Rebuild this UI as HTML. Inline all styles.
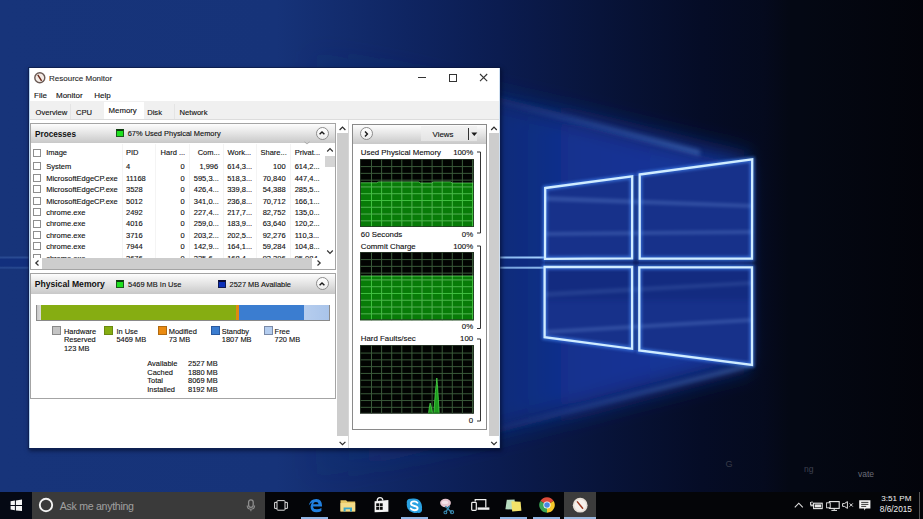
<!DOCTYPE html><html><head><meta charset="utf-8"><style>
*{margin:0;padding:0;box-sizing:border-box}
html,body{width:923px;height:519px;overflow:hidden;background:#0a1440}
body{position:relative;font-family:"Liberation Sans",sans-serif;color:#1a1a1a}
.a{position:absolute}
.t{position:absolute;white-space:nowrap;line-height:1}
svg{position:absolute;overflow:visible}
.hdr{position:absolute;background:linear-gradient(#fdfdfd,#e6e6e6 45%,#c8c8c8)}
.circ{position:absolute;width:13px;height:13px;border-radius:50%;border:1px solid #8c8c8c;background:linear-gradient(#ffffff,#ececec)}
.cb{position:absolute;width:8px;height:8px;border:1px solid #8e8e8e;background:#fff}
</style></head><body>
<svg style="left:0;top:0" width="923" height="492" viewBox="0 0 923 492">
<defs>
<linearGradient id="bgx" x1="0" x2="923" y1="0" y2="0" gradientUnits="userSpaceOnUse">
<stop offset="0" stop-color="#17347a"/>
<stop offset="0.3" stop-color="#163379"/>
<stop offset="0.44" stop-color="#0f2562"/>
<stop offset="0.54" stop-color="#0b1c50"/>
<stop offset="0.65" stop-color="#08143a"/>
<stop offset="0.76" stop-color="#050c26"/>
<stop offset="0.87" stop-color="#040918"/>
<stop offset="1" stop-color="#02040a"/>
</linearGradient>
<linearGradient id="cone" x1="752" x2="300" y1="262" y2="262" gradientUnits="userSpaceOnUse">
<stop offset="0" stop-color="#17389e"/>
<stop offset="0.4" stop-color="#12308f"/>
<stop offset="1" stop-color="#17347a" stop-opacity="0"/>
</linearGradient>
<linearGradient id="rdark" x1="748" x2="790" y1="0" y2="0" gradientUnits="userSpaceOnUse">
<stop offset="0" stop-color="#040a20" stop-opacity="0"/>
<stop offset="0.35" stop-color="#050a1e" stop-opacity=".85"/>
<stop offset="1" stop-color="#040814" stop-opacity="1"/>
</linearGradient>
<linearGradient id="rdk2" x1="800" x2="923" y1="0" y2="0" gradientUnits="userSpaceOnUse"><stop offset="0" stop-color="#020308" stop-opacity="0"/><stop offset="1" stop-color="#020308" stop-opacity=".8"/></linearGradient>
<filter id="b14" x="-50%" y="-50%" width="200%" height="200%"><feGaussianBlur stdDeviation="12"/></filter>
<filter id="b6" x="-50%" y="-50%" width="200%" height="200%"><feGaussianBlur stdDeviation="2.2"/></filter>
<filter id="b2" x="-50%" y="-50%" width="200%" height="200%"><feGaussianBlur stdDeviation="1.5"/></filter>
<filter id="b1" x="-50%" y="-50%" width="200%" height="200%"><feGaussianBlur stdDeviation="0.6"/></filter>
<linearGradient id="hb" x1="0" x2="545" y1="0" y2="0" gradientUnits="userSpaceOnUse">
<stop offset="0" stop-color="#6a9ae8" stop-opacity=".2"/>
<stop offset="0.85" stop-color="#8ac0ff" stop-opacity=".75"/>
<stop offset="1" stop-color="#a8d4ff" stop-opacity="1"/>
</linearGradient>
<linearGradient id="sk" x1="0" x2="1" y1="0" y2="0">
<stop offset="0" stop-color="#5a8ae0" stop-opacity="0.1"/>
<stop offset="1" stop-color="#6a9ae8" stop-opacity="0.7"/>
</linearGradient>
</defs>
<rect width="923" height="492" fill="url(#bgx)"/>
<path d="M752 160 L500 98 L0 -30 L0 560 L500 432 L752 364 Z" fill="url(#cone)" filter="url(#b14)"/>
<rect x="745" y="0" width="178" height="492" fill="url(#rdark)"/>
<rect x="800" y="0" width="123" height="492" fill="url(#rdk2)"/>
<!-- streaks -->
<g filter="url(#b6)">
<path d="M498 96 L700 150 L700 156 L498 104 Z" fill="url(#sk)" opacity=".55"/>
<path d="M498 426 L752 363 L752 367 L498 432 Z" fill="url(#sk)" opacity=".6"/>
</g>
<!-- horizontal beam band -->
<rect x="0" y="258.5" width="545" height="8" fill="#0d2a80" opacity=".5"/>
<rect x="0" y="256.5" width="545" height="2" fill="url(#hb)" filter="url(#b1)"/>
<rect x="0" y="266.7" width="545" height="2" fill="url(#hb)" filter="url(#b1)" opacity=".85"/>
<!-- logo panes fill -->
<g fill="#17318a">
<path d="M545.2 188 L632.2 176.4 L632.1 258.3 L545 258.8 Z"/>
<path d="M639.7 174.5 L752.2 159.4 L752 258.7 L639.7 258.5 Z"/>
<path d="M544.6 266.8 L632.1 267 L632.1 348.8 L544.6 337.2 Z"/>
<path d="M639.3 267.3 L752 267.3 L752 365 L639.3 350.5 Z"/>
</g>
<rect x="633" y="176" width="6" height="174" fill="#0a1c5c" opacity=".8"/><rect x="545" y="259" width="207" height="8" fill="#0a1c5c" opacity=".7"/>
<!-- pane streaks -->
<g filter="url(#b2)" opacity=".22" fill="#8ab4f4">
<path d="M545 196 L752 204 L752 208 L545 201 Z"/>
<path d="M545 232 L752 230 L752 234 L545 236 Z"/>
<path d="M545 292 L752 281 L752 285 L545 297 Z"/>
<path d="M545 330 L752 318 L752 322 L545 334 Z"/>
</g>
<g opacity=".35">
<path d="M545 266 L752 266 L752 300 L545 300 Z" fill="#0d2470" filter="url(#b6)"/>
</g>
<!-- glow outlines -->
<g fill="none" stroke="#4a90ff" stroke-width="5" filter="url(#b2)" opacity=".6">
<path d="M545.2 188 L632.2 176.4 L632.1 258.3 L545 258.8 Z"/>
<path d="M639.7 174.5 L752.2 159.4 L752 258.7 L639.7 258.5 Z"/>
<path d="M544.6 266.8 L632.1 267 L632.1 348.8 L544.6 337.2 Z"/>
<path d="M639.3 267.3 L752 267.3 L752 365 L639.3 350.5 Z"/>
</g>
<g fill="none" stroke="#d0ecff" stroke-width="2.3" stroke-linejoin="miter">
<path d="M545.2 188 L632.2 176.4 L632.1 258.3 L545 258.8 Z"/>
<path d="M639.7 174.5 L752.2 159.4 L752 258.7 L639.7 258.5 Z"/>
<path d="M544.6 266.8 L632.1 267 L632.1 348.8 L544.6 337.2 Z"/>
<path d="M639.3 267.3 L752 267.3 L752 365 L639.3 350.5 Z"/>
</g>
</svg>

<div class="a" style="left:28px;top:67px;width:473px;height:382px;background:rgba(8,16,50,.55);box-shadow:1px 2px 4px rgba(2,6,28,.55)"></div>
<div class="a" style="left:29px;top:68px;width:471px;height:380px;background:#fff"></div>
<svg style="left:34px;top:72px" width="12" height="12"><circle cx="5.8" cy="5.8" r="5" fill="#f3ebe6" stroke="#6a5a55" stroke-width="1.4"/><path d="M3.8 2.8L7.6 8.8" stroke="#6a2a1a" stroke-width="1.4"/></svg>
<div class="t" style="top:75.23px;font-size:8px;color:#2a2a2a;-webkit-text-stroke:0.12px currentColor;left:49.00px;">Resource Monitor</div>
<div class="a" style="left:418px;top:77px;width:8px;height:1px;background:#333"></div>
<div class="a" style="left:449px;top:74px;width:7.5px;height:7.5px;border:1px solid #333"></div>
<svg style="left:479px;top:73px" width="9" height="9"><path d="M1 1L8.2 8.2M8.2 1L1 8.2" stroke="#333" stroke-width="1.1"/></svg>
<div class="t" style="top:92.03px;font-size:8px;color:#111;-webkit-text-stroke:0.12px currentColor;left:34.00px;">File</div>
<div class="t" style="top:92.03px;font-size:8px;color:#111;-webkit-text-stroke:0.12px currentColor;left:56.00px;">Monitor</div>
<div class="t" style="top:92.03px;font-size:8px;color:#111;-webkit-text-stroke:0.12px currentColor;left:94.30px;">Help</div>
<div class="a" style="left:29px;top:101px;width:471px;height:18px;background:#f0f0f0"></div>
<div class="a" style="left:32.8px;top:104px;width:38.2px;height:15px;background:#f0f0f0;border-right:1px solid #e4e4e4"></div>
<div class="t" style="top:108.57px;font-size:7.6px;color:#111;-webkit-text-stroke:0.12px currentColor;left:35.60px;">Overview</div>
<div class="a" style="left:71px;top:104px;width:32.8px;height:15px;background:#f0f0f0"></div>
<div class="t" style="top:108.57px;font-size:7.6px;color:#111;-webkit-text-stroke:0.12px currentColor;left:76.00px;">CPU</div>
<div class="a" style="left:103.8px;top:102px;width:40.2px;height:17px;background:#fff"></div>
<div class="t" style="top:106.90px;font-size:7.8px;color:#111;-webkit-text-stroke:0.12px currentColor;left:108.60px;">Memory</div>
<div class="a" style="left:144px;top:104px;width:31px;height:15px;background:#f0f0f0;border-right:1px solid #e4e4e4"></div>
<div class="t" style="top:108.57px;font-size:7.6px;color:#111;-webkit-text-stroke:0.12px currentColor;left:147.20px;">Disk</div>
<div class="a" style="left:175px;top:104px;width:38px;height:15px;background:#f0f0f0"></div>
<div class="t" style="top:108.57px;font-size:7.6px;color:#111;-webkit-text-stroke:0.12px currentColor;left:179.60px;">Network</div>
<div class="a" style="left:29px;top:119px;width:471px;height:1px;background:#dcdcdc"></div>
<div class="a" style="left:30.2px;top:123px;width:305.8px;height:147px;border:1px solid #a4a4a4;background:#fff"></div>
<div class="hdr" style="left:31.2px;top:124px;width:303.8px;height:19px"></div>
<div class="t" style="top:130.56px;font-size:8.2px;color:#111;font-weight:bold;left:35.00px;">Processes</div>
<div class="a" style="left:116px;top:129px;width:8px;height:8px;background:#1ee01e;border:1px solid #1a5a1a;border-top:2px solid #0d3a0d"></div>
<div class="t" style="top:130.19px;font-size:7.45px;color:#111;-webkit-text-stroke:0.12px currentColor;left:127.70px;">67% Used Physical Memory</div>
<div class="circ" style="left:315.5px;top:126.5px"></div>
<svg style="left:318px;top:129px" width="8" height="8"><path d="M1.6 5.3L4 2.9L6.4 5.3" stroke="#1a1a1a" stroke-width="1.4" fill="none"/></svg>
<div class="a" style="left:121.6px;top:144px;width:1px;height:114px;background:#f4f4f4"></div>
<div class="a" style="left:155.4px;top:144px;width:1px;height:114px;background:#f4f4f4"></div>
<div class="a" style="left:188.6px;top:144px;width:1px;height:114px;background:#f4f4f4"></div>
<div class="a" style="left:222.6px;top:144px;width:1px;height:114px;background:#f4f4f4"></div>
<div class="a" style="left:256px;top:144px;width:1px;height:114px;background:#f4f4f4"></div>
<div class="a" style="left:290.4px;top:144px;width:1px;height:114px;background:#f4f4f4"></div>
<div class="cb" style="left:33.1px;top:148.5px"></div>
<div class="t" style="top:148.85px;font-size:7.5px;color:#111;-webkit-text-stroke:0.12px currentColor;left:46.20px;">Image</div>
<div class="t" style="top:148.85px;font-size:7.5px;color:#111;-webkit-text-stroke:0.12px currentColor;left:126.00px;">PID</div>
<div class="t" style="top:148.85px;font-size:7.5px;color:#111;-webkit-text-stroke:0.12px currentColor;left:160.60px;">Hard ...</div>
<div class="t" style="top:148.85px;font-size:7.5px;color:#111;-webkit-text-stroke:0.12px currentColor;left:197.70px;">Com...</div>
<div class="t" style="top:148.85px;font-size:7.5px;color:#111;-webkit-text-stroke:0.12px currentColor;left:227.60px;">Work...</div>
<div class="t" style="top:148.85px;font-size:7.5px;color:#111;-webkit-text-stroke:0.12px currentColor;left:260.50px;">Share...</div>
<div class="t" style="top:148.85px;font-size:7.5px;color:#111;-webkit-text-stroke:0.12px currentColor;left:294.70px;">Privat...</div>
<svg style="left:304px;top:141px" width="6" height="4"><path d="M0.5 0.8L3 3L5.5 0.8" stroke="#a0a0a0" stroke-width="0.8" fill="none"/></svg>
<div class="cb" style="left:33.1px;top:162.30px"></div>
<div class="t" style="top:163.15px;font-size:7.5px;color:#111;-webkit-text-stroke:0.12px currentColor;left:46.20px;">System</div>
<div class="t" style="top:163.15px;font-size:7.5px;color:#111;-webkit-text-stroke:0.12px currentColor;left:126.00px;">4</div>
<div class="t" style="top:163.15px;font-size:7.5px;color:#111;-webkit-text-stroke:0.12px currentColor;right:738.40px;text-align:right;">0</div>
<div class="t" style="top:163.15px;font-size:7.5px;color:#111;-webkit-text-stroke:0.12px currentColor;right:704.80px;text-align:right;">1,996</div>
<div class="t" style="top:163.15px;font-size:7.5px;color:#111;-webkit-text-stroke:0.12px currentColor;left:227.20px;">614,3...</div>
<div class="t" style="top:163.15px;font-size:7.5px;color:#111;-webkit-text-stroke:0.12px currentColor;right:637.40px;text-align:right;">100</div>
<div class="t" style="top:163.15px;font-size:7.5px;color:#111;-webkit-text-stroke:0.12px currentColor;left:294.70px;">614,2...</div>
<div class="cb" style="left:33.1px;top:173.75px"></div>
<div class="t" style="top:174.60px;font-size:7.5px;color:#111;-webkit-text-stroke:0.12px currentColor;left:46.20px;">MicrosoftEdgeCP.exe</div>
<div class="t" style="top:174.60px;font-size:7.5px;color:#111;-webkit-text-stroke:0.12px currentColor;left:126.00px;">11168</div>
<div class="t" style="top:174.60px;font-size:7.5px;color:#111;-webkit-text-stroke:0.12px currentColor;right:738.40px;text-align:right;">0</div>
<div class="t" style="top:174.60px;font-size:7.5px;color:#111;-webkit-text-stroke:0.12px currentColor;right:704.20px;text-align:right;">595,3...</div>
<div class="t" style="top:174.60px;font-size:7.5px;color:#111;-webkit-text-stroke:0.12px currentColor;left:227.20px;">518,3...</div>
<div class="t" style="top:174.60px;font-size:7.5px;color:#111;-webkit-text-stroke:0.12px currentColor;right:637.40px;text-align:right;">70,840</div>
<div class="t" style="top:174.60px;font-size:7.5px;color:#111;-webkit-text-stroke:0.12px currentColor;left:294.70px;">447,4...</div>
<div class="cb" style="left:33.1px;top:185.20px"></div>
<div class="t" style="top:186.05px;font-size:7.5px;color:#111;-webkit-text-stroke:0.12px currentColor;left:46.20px;">MicrosoftEdgeCP.exe</div>
<div class="t" style="top:186.05px;font-size:7.5px;color:#111;-webkit-text-stroke:0.12px currentColor;left:126.00px;">3528</div>
<div class="t" style="top:186.05px;font-size:7.5px;color:#111;-webkit-text-stroke:0.12px currentColor;right:738.40px;text-align:right;">0</div>
<div class="t" style="top:186.05px;font-size:7.5px;color:#111;-webkit-text-stroke:0.12px currentColor;right:704.20px;text-align:right;">426,4...</div>
<div class="t" style="top:186.05px;font-size:7.5px;color:#111;-webkit-text-stroke:0.12px currentColor;left:227.20px;">339,8...</div>
<div class="t" style="top:186.05px;font-size:7.5px;color:#111;-webkit-text-stroke:0.12px currentColor;right:637.40px;text-align:right;">54,388</div>
<div class="t" style="top:186.05px;font-size:7.5px;color:#111;-webkit-text-stroke:0.12px currentColor;left:294.70px;">285,5...</div>
<div class="cb" style="left:33.1px;top:196.65px"></div>
<div class="t" style="top:197.50px;font-size:7.5px;color:#111;-webkit-text-stroke:0.12px currentColor;left:46.20px;">MicrosoftEdgeCP.exe</div>
<div class="t" style="top:197.50px;font-size:7.5px;color:#111;-webkit-text-stroke:0.12px currentColor;left:126.00px;">5012</div>
<div class="t" style="top:197.50px;font-size:7.5px;color:#111;-webkit-text-stroke:0.12px currentColor;right:738.40px;text-align:right;">0</div>
<div class="t" style="top:197.50px;font-size:7.5px;color:#111;-webkit-text-stroke:0.12px currentColor;right:704.20px;text-align:right;">341,0...</div>
<div class="t" style="top:197.50px;font-size:7.5px;color:#111;-webkit-text-stroke:0.12px currentColor;left:227.20px;">236,8...</div>
<div class="t" style="top:197.50px;font-size:7.5px;color:#111;-webkit-text-stroke:0.12px currentColor;right:637.40px;text-align:right;">70,712</div>
<div class="t" style="top:197.50px;font-size:7.5px;color:#111;-webkit-text-stroke:0.12px currentColor;left:294.70px;">166,1...</div>
<div class="cb" style="left:33.1px;top:208.10px"></div>
<div class="t" style="top:208.95px;font-size:7.5px;color:#111;-webkit-text-stroke:0.12px currentColor;left:46.20px;">chrome.exe</div>
<div class="t" style="top:208.95px;font-size:7.5px;color:#111;-webkit-text-stroke:0.12px currentColor;left:126.00px;">2492</div>
<div class="t" style="top:208.95px;font-size:7.5px;color:#111;-webkit-text-stroke:0.12px currentColor;right:738.40px;text-align:right;">0</div>
<div class="t" style="top:208.95px;font-size:7.5px;color:#111;-webkit-text-stroke:0.12px currentColor;right:704.20px;text-align:right;">227,4...</div>
<div class="t" style="top:208.95px;font-size:7.5px;color:#111;-webkit-text-stroke:0.12px currentColor;left:227.20px;">217,7...</div>
<div class="t" style="top:208.95px;font-size:7.5px;color:#111;-webkit-text-stroke:0.12px currentColor;right:637.40px;text-align:right;">82,752</div>
<div class="t" style="top:208.95px;font-size:7.5px;color:#111;-webkit-text-stroke:0.12px currentColor;left:294.70px;">135,0...</div>
<div class="cb" style="left:33.1px;top:219.55px"></div>
<div class="t" style="top:220.40px;font-size:7.5px;color:#111;-webkit-text-stroke:0.12px currentColor;left:46.20px;">chrome.exe</div>
<div class="t" style="top:220.40px;font-size:7.5px;color:#111;-webkit-text-stroke:0.12px currentColor;left:126.00px;">4016</div>
<div class="t" style="top:220.40px;font-size:7.5px;color:#111;-webkit-text-stroke:0.12px currentColor;right:738.40px;text-align:right;">0</div>
<div class="t" style="top:220.40px;font-size:7.5px;color:#111;-webkit-text-stroke:0.12px currentColor;right:704.20px;text-align:right;">259,0...</div>
<div class="t" style="top:220.40px;font-size:7.5px;color:#111;-webkit-text-stroke:0.12px currentColor;left:227.20px;">183,9...</div>
<div class="t" style="top:220.40px;font-size:7.5px;color:#111;-webkit-text-stroke:0.12px currentColor;right:637.40px;text-align:right;">63,640</div>
<div class="t" style="top:220.40px;font-size:7.5px;color:#111;-webkit-text-stroke:0.12px currentColor;left:294.70px;">120,2...</div>
<div class="cb" style="left:33.1px;top:231.00px"></div>
<div class="t" style="top:231.85px;font-size:7.5px;color:#111;-webkit-text-stroke:0.12px currentColor;left:46.20px;">chrome.exe</div>
<div class="t" style="top:231.85px;font-size:7.5px;color:#111;-webkit-text-stroke:0.12px currentColor;left:126.00px;">3716</div>
<div class="t" style="top:231.85px;font-size:7.5px;color:#111;-webkit-text-stroke:0.12px currentColor;right:738.40px;text-align:right;">0</div>
<div class="t" style="top:231.85px;font-size:7.5px;color:#111;-webkit-text-stroke:0.12px currentColor;right:704.20px;text-align:right;">203,2...</div>
<div class="t" style="top:231.85px;font-size:7.5px;color:#111;-webkit-text-stroke:0.12px currentColor;left:227.20px;">202,5...</div>
<div class="t" style="top:231.85px;font-size:7.5px;color:#111;-webkit-text-stroke:0.12px currentColor;right:637.40px;text-align:right;">92,276</div>
<div class="t" style="top:231.85px;font-size:7.5px;color:#111;-webkit-text-stroke:0.12px currentColor;left:294.70px;">110,3...</div>
<div class="cb" style="left:33.1px;top:242.45px"></div>
<div class="t" style="top:243.30px;font-size:7.5px;color:#111;-webkit-text-stroke:0.12px currentColor;left:46.20px;">chrome.exe</div>
<div class="t" style="top:243.30px;font-size:7.5px;color:#111;-webkit-text-stroke:0.12px currentColor;left:126.00px;">7944</div>
<div class="t" style="top:243.30px;font-size:7.5px;color:#111;-webkit-text-stroke:0.12px currentColor;right:738.40px;text-align:right;">0</div>
<div class="t" style="top:243.30px;font-size:7.5px;color:#111;-webkit-text-stroke:0.12px currentColor;right:704.20px;text-align:right;">142,9...</div>
<div class="t" style="top:243.30px;font-size:7.5px;color:#111;-webkit-text-stroke:0.12px currentColor;left:227.20px;">164,1...</div>
<div class="t" style="top:243.30px;font-size:7.5px;color:#111;-webkit-text-stroke:0.12px currentColor;right:637.40px;text-align:right;">59,284</div>
<div class="t" style="top:243.30px;font-size:7.5px;color:#111;-webkit-text-stroke:0.12px currentColor;left:294.70px;">104,8...</div>
<div class="cb" style="left:33.1px;top:253.90px"></div>
<div class="t" style="top:254.75px;font-size:7.5px;color:#111;-webkit-text-stroke:0.12px currentColor;left:46.20px;">chrome.exe</div>
<div class="t" style="top:254.75px;font-size:7.5px;color:#111;-webkit-text-stroke:0.12px currentColor;left:126.00px;">3676</div>
<div class="t" style="top:254.75px;font-size:7.5px;color:#111;-webkit-text-stroke:0.12px currentColor;right:738.40px;text-align:right;">0</div>
<div class="t" style="top:254.75px;font-size:7.5px;color:#111;-webkit-text-stroke:0.12px currentColor;right:704.20px;text-align:right;">225,6...</div>
<div class="t" style="top:254.75px;font-size:7.5px;color:#111;-webkit-text-stroke:0.12px currentColor;left:227.20px;">168,4...</div>
<div class="t" style="top:254.75px;font-size:7.5px;color:#111;-webkit-text-stroke:0.12px currentColor;right:637.40px;text-align:right;">93,396</div>
<div class="t" style="top:254.75px;font-size:7.5px;color:#111;-webkit-text-stroke:0.12px currentColor;left:294.70px;">95,084</div>
<div class="a" style="left:32px;top:258px;width:303px;height:11px;background:#fff"></div>
<div class="a" style="left:41.7px;top:258.4px;width:270.3px;height:10.4px;background:#cdcdcd"></div>
<svg style="left:34px;top:259px" width="6" height="8"><path d="M4.5 1.5L1.8 4L4.5 6.5" stroke="#333" stroke-width="1.2" fill="none"/></svg>
<svg style="left:315.5px;top:259px" width="6" height="8"><path d="M1.5 1.5L4.2 4L1.5 6.5" stroke="#333" stroke-width="1.2" fill="none"/></svg>
<div class="a" style="left:324.5px;top:144px;width:10.5px;height:114px;background:#fff"></div>
<div class="a" style="left:324.5px;top:156px;width:10.5px;height:10.5px;background:#d4d4d4"></div>
<svg style="left:326px;top:147px" width="8" height="6"><path d="M1.2 4.5L4 1.7L6.8 4.5" stroke="#333" stroke-width="1.2" fill="none"/></svg>
<svg style="left:326px;top:249px" width="8" height="6"><path d="M1.2 1.5L4 4.3L6.8 1.5" stroke="#333" stroke-width="1.2" fill="none"/></svg>
<div class="a" style="left:30.2px;top:273px;width:305.8px;height:126px;border:1px solid #a4a4a4;background:#fff"></div>
<div class="hdr" style="left:31.2px;top:274px;width:303.8px;height:19.5px"></div>
<div class="t" style="top:280.22px;font-size:8.6px;color:#111;font-weight:bold;left:34.70px;">Physical Memory</div>
<div class="a" style="left:116px;top:279.5px;width:8px;height:8px;background:#1ee01e;border:1px solid #1a5a1a;border-top:2px solid #0d3a0d"></div>
<div class="t" style="top:280.69px;font-size:7.45px;color:#111;-webkit-text-stroke:0.12px currentColor;left:128.00px;">5469 MB In Use</div>
<div class="a" style="left:217.5px;top:279.5px;width:8px;height:8px;background:#0b2fb8;border:1px solid #101a50;border-top:2px solid #0a0a30"></div>
<div class="t" style="top:280.69px;font-size:7.45px;color:#111;-webkit-text-stroke:0.12px currentColor;left:229.50px;">2527 MB Available</div>
<div class="circ" style="left:315.5px;top:277px"></div>
<svg style="left:318px;top:279.5px" width="8" height="8"><path d="M1.6 5.3L4 2.9L6.4 5.3" stroke="#1a1a1a" stroke-width="1.4" fill="none"/></svg>
<div class="a" style="left:35.8px;top:304.6px;width:294px;height:16px;background:#8a8a8a"></div>
<div class="a" style="left:36.6px;top:305.4px;width:4.6px;height:14.4px;background:linear-gradient(90deg,#c8c8c8,#dcdcdc)"></div>
<div class="a" style="left:41.2px;top:305.4px;width:195.1px;height:14.4px;background:#86ad12"></div>
<div class="a" style="left:236.3px;top:305.4px;width:2.6px;height:14.4px;background:#e08a12"></div>
<div class="a" style="left:238.9px;top:305.4px;width:65px;height:14.4px;background:#3b7dd0"></div>
<div class="a" style="left:303.9px;top:305.4px;width:25.1px;height:14.4px;background:linear-gradient(90deg,#b6cdee,#a9c4ea)"></div>
<div class="a" style="left:52.3px;top:326.2px;width:9px;height:9.3px;background:#c4c4c4;border:1px solid #8a8a8a"></div>
<div class="t" style="top:327.69px;font-size:7.45px;color:#111;-webkit-text-stroke:0.12px currentColor;left:63.90px;">Hardware</div>
<div class="t" style="top:336.29px;font-size:7.45px;color:#111;-webkit-text-stroke:0.12px currentColor;left:63.90px;">Reserved</div>
<div class="t" style="top:344.89px;font-size:7.45px;color:#111;-webkit-text-stroke:0.12px currentColor;left:63.90px;">123 MB</div>
<div class="a" style="left:104.3px;top:326.2px;width:9px;height:9.3px;background:#86ad12;border:1px solid #6a8a10"></div>
<div class="t" style="top:327.69px;font-size:7.45px;color:#111;-webkit-text-stroke:0.12px currentColor;left:116.40px;">In Use</div>
<div class="t" style="top:336.29px;font-size:7.45px;color:#111;-webkit-text-stroke:0.12px currentColor;left:116.40px;">5469 MB</div>
<div class="a" style="left:157.6px;top:326.2px;width:9px;height:9.3px;background:#ea8a10;border:1px solid #b06a10"></div>
<div class="t" style="top:327.69px;font-size:7.45px;color:#111;-webkit-text-stroke:0.12px currentColor;left:168.70px;">Modified</div>
<div class="t" style="top:336.29px;font-size:7.45px;color:#111;-webkit-text-stroke:0.12px currentColor;left:168.70px;">73 MB</div>
<div class="a" style="left:210.5px;top:326.2px;width:9px;height:9.3px;background:#3b7dd0;border:1px solid #2a5aa0"></div>
<div class="t" style="top:327.69px;font-size:7.45px;color:#111;-webkit-text-stroke:0.12px currentColor;left:221.80px;">Standby</div>
<div class="t" style="top:336.29px;font-size:7.45px;color:#111;-webkit-text-stroke:0.12px currentColor;left:221.80px;">1807 MB</div>
<div class="a" style="left:263.6px;top:326.2px;width:9px;height:9.3px;background:#b4cdef;border:1px solid #7a8aa8"></div>
<div class="t" style="top:327.69px;font-size:7.45px;color:#111;-webkit-text-stroke:0.12px currentColor;left:274.60px;">Free</div>
<div class="t" style="top:336.29px;font-size:7.45px;color:#111;-webkit-text-stroke:0.12px currentColor;left:274.60px;">720 MB</div>
<div class="t" style="top:360.19px;font-size:7.45px;color:#111;-webkit-text-stroke:0.12px currentColor;left:147.30px;">Available</div>
<div class="t" style="top:360.19px;font-size:7.45px;color:#111;-webkit-text-stroke:0.12px currentColor;left:188.00px;">2527 MB</div>
<div class="t" style="top:368.79px;font-size:7.45px;color:#111;-webkit-text-stroke:0.12px currentColor;left:147.30px;">Cached</div>
<div class="t" style="top:368.79px;font-size:7.45px;color:#111;-webkit-text-stroke:0.12px currentColor;left:188.00px;">1880 MB</div>
<div class="t" style="top:377.39px;font-size:7.45px;color:#111;-webkit-text-stroke:0.12px currentColor;left:147.30px;">Total</div>
<div class="t" style="top:377.39px;font-size:7.45px;color:#111;-webkit-text-stroke:0.12px currentColor;left:188.00px;">8069 MB</div>
<div class="t" style="top:385.99px;font-size:7.45px;color:#111;-webkit-text-stroke:0.12px currentColor;left:147.30px;">Installed</div>
<div class="t" style="top:385.99px;font-size:7.45px;color:#111;-webkit-text-stroke:0.12px currentColor;left:188.00px;">8192 MB</div>
<div class="a" style="left:337px;top:132.5px;width:11px;height:303px;background:#cdcdcd"></div>
<svg style="left:338px;top:125px" width="9" height="7"><path d="M1.6 5L4.5 2.1L7.4 5" stroke="#2a2a2a" stroke-width="1.2" fill="none"/></svg>
<svg style="left:338px;top:439.5px" width="9" height="7"><path d="M1.6 1.8L4.5 4.7L7.4 1.8" stroke="#2a2a2a" stroke-width="1.2" fill="none"/></svg>
<div class="a" style="left:348.3px;top:119px;width:1px;height:329px;background:#d6d6d6"></div>
<div class="a" style="left:352px;top:123.5px;width:135px;height:306.5px;border:1px solid #8a8a8a;background:#fff"></div>
<div class="hdr" style="left:353px;top:124.5px;width:133px;height:19.5px"></div>
<div class="circ" style="left:359.5px;top:127.2px"></div>
<svg style="left:362px;top:129.7px" width="8" height="8"><path d="M3 1.6L5.4 4L3 6.4" stroke="#1a1a1a" stroke-width="1.4" fill="none"/></svg>
<div class="a" style="left:420.6px;top:126.3px;width:56.2px;height:15px;background:linear-gradient(#f2f2f2,#e4e4e4)"></div>
<div class="t" style="top:130.91px;font-size:7.9px;color:#111;-webkit-text-stroke:0.12px currentColor;left:432.60px;">Views</div>
<div class="a" style="left:468.2px;top:128px;width:1px;height:11.5px;background:#333"></div>
<svg style="left:470.5px;top:131.5px" width="7" height="5"><path d="M0.3 0.5L6.3 0.5L3.3 4z" fill="#1a1a1a"/></svg>
<div class="t" style="top:149.35px;font-size:7.85px;color:#111;-webkit-text-stroke:0.12px currentColor;left:360.80px;">Used Physical Memory</div>
<div class="t" style="top:149.35px;font-size:7.85px;color:#111;-webkit-text-stroke:0.12px currentColor;right:449.80px;text-align:right;">100%</div>
<svg style="left:360px;top:158.5px" width="114" height="68.0" viewBox="0 0 114 68.0"><rect x="0" y="0" width="114" height="68.0" fill="#020402"/><polygon points="0,68.0 0,23.8 16.5,23.8 18.5,22.9 58.5,22.9 60.5,24 71.5,24 73.5,22.9 90.5,22.9 92.5,24 114,24 114,68.0" fill="#087c08"/><rect x="11.00" y="0" width="1" height="68.0" fill="#3a5a3a"/><rect x="21.10" y="0" width="1" height="68.0" fill="#3a5a3a"/><rect x="31.20" y="0" width="1" height="68.0" fill="#3a5a3a"/><rect x="41.30" y="0" width="1" height="68.0" fill="#3a5a3a"/><rect x="51.40" y="0" width="1" height="68.0" fill="#3a5a3a"/><rect x="61.50" y="0" width="1" height="68.0" fill="#3a5a3a"/><rect x="71.60" y="0" width="1" height="68.0" fill="#3a5a3a"/><rect x="81.70" y="0" width="1" height="68.0" fill="#3a5a3a"/><rect x="91.80" y="0" width="1" height="68.0" fill="#3a5a3a"/><rect x="101.90" y="0" width="1" height="68.0" fill="#3a5a3a"/><rect x="112.00" y="0" width="1" height="68.0" fill="#3a5a3a"/><rect x="0" y="7.08" width="114" height="1" fill="#3a5a3a"/><rect x="0" y="13.86" width="114" height="1" fill="#3a5a3a"/><rect x="0" y="20.64" width="114" height="1" fill="#3a5a3a"/><rect x="0" y="27.42" width="114" height="1" fill="#3a5a3a"/><rect x="0" y="34.20" width="114" height="1" fill="#3a5a3a"/><rect x="0" y="40.98" width="114" height="1" fill="#3a5a3a"/><rect x="0" y="47.76" width="114" height="1" fill="#3a5a3a"/><rect x="0" y="54.54" width="114" height="1" fill="#3a5a3a"/><rect x="0" y="61.32" width="114" height="1" fill="#3a5a3a"/><clipPath id="c360158"><polygon points="0,68.0 0,23.8 16.5,23.8 18.5,22.9 58.5,22.9 60.5,24 71.5,24 73.5,22.9 90.5,22.9 92.5,24 114,24 114,68.0"/></clipPath><g clip-path="url(#c360158)"><rect x="11.00" y="0" width="1" height="68.0" fill="#40c040"/><rect x="21.10" y="0" width="1" height="68.0" fill="#40c040"/><rect x="31.20" y="0" width="1" height="68.0" fill="#40c040"/><rect x="41.30" y="0" width="1" height="68.0" fill="#40c040"/><rect x="51.40" y="0" width="1" height="68.0" fill="#40c040"/><rect x="61.50" y="0" width="1" height="68.0" fill="#40c040"/><rect x="71.60" y="0" width="1" height="68.0" fill="#40c040"/><rect x="81.70" y="0" width="1" height="68.0" fill="#40c040"/><rect x="91.80" y="0" width="1" height="68.0" fill="#40c040"/><rect x="101.90" y="0" width="1" height="68.0" fill="#40c040"/><rect x="112.00" y="0" width="1" height="68.0" fill="#40c040"/><rect x="0" y="7.08" width="114" height="1" fill="#40c040"/><rect x="0" y="13.86" width="114" height="1" fill="#40c040"/><rect x="0" y="20.64" width="114" height="1" fill="#40c040"/><rect x="0" y="27.42" width="114" height="1" fill="#40c040"/><rect x="0" y="34.20" width="114" height="1" fill="#40c040"/><rect x="0" y="40.98" width="114" height="1" fill="#40c040"/><rect x="0" y="47.76" width="114" height="1" fill="#40c040"/><rect x="0" y="54.54" width="114" height="1" fill="#40c040"/><rect x="0" y="61.32" width="114" height="1" fill="#40c040"/></g><polyline points="0,23.8 16.5,23.8 18.5,22.9 58.5,22.9 60.5,24 71.5,24 73.5,22.9 90.5,22.9 92.5,24 114,24" fill="none" stroke="#6ad86a" stroke-width="0.9" opacity=".8"/><rect x="0.4" y="0.4" width="113.2" height="67.2" fill="none" stroke="#2a3a2a" stroke-width="0.8"/></svg>
<div class="t" style="top:230.85px;font-size:7.85px;color:#111;-webkit-text-stroke:0.12px currentColor;left:360.80px;">60 Seconds</div>
<div class="t" style="top:230.85px;font-size:7.85px;color:#111;-webkit-text-stroke:0.12px currentColor;right:449.80px;text-align:right;">0%</div>
<svg style="left:476.6px;top:151px" width="6" height="83"><path d="M0 1H3.5V82H0" stroke="#333" stroke-width="1" fill="none"/></svg>
<div class="t" style="top:242.55px;font-size:7.85px;color:#111;-webkit-text-stroke:0.12px currentColor;left:360.80px;">Commit Charge</div>
<div class="t" style="top:242.55px;font-size:7.85px;color:#111;-webkit-text-stroke:0.12px currentColor;right:449.80px;text-align:right;">100%</div>
<svg style="left:360px;top:252px" width="114" height="68.19999999999999" viewBox="0 0 114 68.19999999999999"><rect x="0" y="0" width="114" height="68.19999999999999" fill="#020402"/><rect x="0" y="24" width="114" height="44.19999999999999" fill="#087c08"/><rect x="11.00" y="0" width="1" height="68.19999999999999" fill="#3a5a3a"/><rect x="21.10" y="0" width="1" height="68.19999999999999" fill="#3a5a3a"/><rect x="31.20" y="0" width="1" height="68.19999999999999" fill="#3a5a3a"/><rect x="41.30" y="0" width="1" height="68.19999999999999" fill="#3a5a3a"/><rect x="51.40" y="0" width="1" height="68.19999999999999" fill="#3a5a3a"/><rect x="61.50" y="0" width="1" height="68.19999999999999" fill="#3a5a3a"/><rect x="71.60" y="0" width="1" height="68.19999999999999" fill="#3a5a3a"/><rect x="81.70" y="0" width="1" height="68.19999999999999" fill="#3a5a3a"/><rect x="91.80" y="0" width="1" height="68.19999999999999" fill="#3a5a3a"/><rect x="101.90" y="0" width="1" height="68.19999999999999" fill="#3a5a3a"/><rect x="112.00" y="0" width="1" height="68.19999999999999" fill="#3a5a3a"/><rect x="0" y="7.08" width="114" height="1" fill="#3a5a3a"/><rect x="0" y="13.86" width="114" height="1" fill="#3a5a3a"/><rect x="0" y="20.64" width="114" height="1" fill="#3a5a3a"/><rect x="0" y="27.42" width="114" height="1" fill="#3a5a3a"/><rect x="0" y="34.20" width="114" height="1" fill="#3a5a3a"/><rect x="0" y="40.98" width="114" height="1" fill="#3a5a3a"/><rect x="0" y="47.76" width="114" height="1" fill="#3a5a3a"/><rect x="0" y="54.54" width="114" height="1" fill="#3a5a3a"/><rect x="0" y="61.32" width="114" height="1" fill="#3a5a3a"/><clipPath id="c360252"><rect x="0" y="24" width="114" height="44.19999999999999"/></clipPath><g clip-path="url(#c360252)"><rect x="11.00" y="0" width="1" height="68.19999999999999" fill="#40c040"/><rect x="21.10" y="0" width="1" height="68.19999999999999" fill="#40c040"/><rect x="31.20" y="0" width="1" height="68.19999999999999" fill="#40c040"/><rect x="41.30" y="0" width="1" height="68.19999999999999" fill="#40c040"/><rect x="51.40" y="0" width="1" height="68.19999999999999" fill="#40c040"/><rect x="61.50" y="0" width="1" height="68.19999999999999" fill="#40c040"/><rect x="71.60" y="0" width="1" height="68.19999999999999" fill="#40c040"/><rect x="81.70" y="0" width="1" height="68.19999999999999" fill="#40c040"/><rect x="91.80" y="0" width="1" height="68.19999999999999" fill="#40c040"/><rect x="101.90" y="0" width="1" height="68.19999999999999" fill="#40c040"/><rect x="112.00" y="0" width="1" height="68.19999999999999" fill="#40c040"/><rect x="0" y="7.08" width="114" height="1" fill="#40c040"/><rect x="0" y="13.86" width="114" height="1" fill="#40c040"/><rect x="0" y="20.64" width="114" height="1" fill="#40c040"/><rect x="0" y="27.42" width="114" height="1" fill="#40c040"/><rect x="0" y="34.20" width="114" height="1" fill="#40c040"/><rect x="0" y="40.98" width="114" height="1" fill="#40c040"/><rect x="0" y="47.76" width="114" height="1" fill="#40c040"/><rect x="0" y="54.54" width="114" height="1" fill="#40c040"/><rect x="0" y="61.32" width="114" height="1" fill="#40c040"/></g><rect x="0" y="23.5" width="114" height="1" fill="#6ad86a" opacity=".8"/><rect x="0.4" y="0.4" width="113.2" height="67.39999999999999" fill="none" stroke="#2a3a2a" stroke-width="0.8"/></svg>
<div class="t" style="top:323.35px;font-size:7.85px;color:#111;-webkit-text-stroke:0.12px currentColor;right:449.80px;text-align:right;">0%</div>
<svg style="left:476.6px;top:244.5px" width="6" height="84.5"><path d="M0 1H3.5V83.5H0" stroke="#333" stroke-width="1" fill="none"/></svg>
<div class="t" style="top:335.35px;font-size:7.85px;color:#111;-webkit-text-stroke:0.12px currentColor;left:360.80px;">Hard Faults/sec</div>
<div class="t" style="top:335.35px;font-size:7.85px;color:#111;-webkit-text-stroke:0.12px currentColor;right:449.80px;text-align:right;">100</div>
<svg style="left:360px;top:345.3px" width="114" height="68.5" viewBox="0 0 114 68.5"><rect x="0" y="0" width="114" height="68.5" fill="#020402"/><rect x="11.00" y="0" width="1" height="68.5" fill="#3a5a3a"/><rect x="21.10" y="0" width="1" height="68.5" fill="#3a5a3a"/><rect x="31.20" y="0" width="1" height="68.5" fill="#3a5a3a"/><rect x="41.30" y="0" width="1" height="68.5" fill="#3a5a3a"/><rect x="51.40" y="0" width="1" height="68.5" fill="#3a5a3a"/><rect x="61.50" y="0" width="1" height="68.5" fill="#3a5a3a"/><rect x="71.60" y="0" width="1" height="68.5" fill="#3a5a3a"/><rect x="81.70" y="0" width="1" height="68.5" fill="#3a5a3a"/><rect x="91.80" y="0" width="1" height="68.5" fill="#3a5a3a"/><rect x="101.90" y="0" width="1" height="68.5" fill="#3a5a3a"/><rect x="112.00" y="0" width="1" height="68.5" fill="#3a5a3a"/><rect x="0" y="7.58" width="114" height="1" fill="#3a5a3a"/><rect x="0" y="14.36" width="114" height="1" fill="#3a5a3a"/><rect x="0" y="21.14" width="114" height="1" fill="#3a5a3a"/><rect x="0" y="27.92" width="114" height="1" fill="#3a5a3a"/><rect x="0" y="34.70" width="114" height="1" fill="#3a5a3a"/><rect x="0" y="41.48" width="114" height="1" fill="#3a5a3a"/><rect x="0" y="48.26" width="114" height="1" fill="#3a5a3a"/><rect x="0" y="55.04" width="114" height="1" fill="#3a5a3a"/><rect x="0" y="61.82" width="114" height="1" fill="#3a5a3a"/><path d="M68.5 68.5 L69.6 60.5 L70.2 58.0 L71.2 61.5 L72.6 68.5 L73.8 68.5 L75.4 46.5 L76.4 38.5 L76.8 33.0 L77.4 39.5 L78.4 54.5 L79.2 68.5 Z" fill="#1c9a1c" stroke="#4ad84a" stroke-width="0.8"/><rect x="0.4" y="0.4" width="113.2" height="67.7" fill="none" stroke="#2a3a2a" stroke-width="0.8"/></svg>
<div class="t" style="top:417.35px;font-size:7.85px;color:#111;-webkit-text-stroke:0.12px currentColor;right:449.80px;text-align:right;">0</div>
<svg style="left:476.6px;top:338px" width="6" height="84"><path d="M0 1H3.5V83H0" stroke="#333" stroke-width="1" fill="none"/></svg>
<div class="a" style="left:489px;top:132.5px;width:10.5px;height:303px;background:#cdcdcd"></div>
<div class="a" style="left:499px;top:68px;width:1px;height:380px;background:#cfe0f2"></div>
<div class="a" style="left:29px;top:68px;width:1px;height:380px;background:#b8d6f2"></div>
<svg style="left:490px;top:125px" width="8" height="7"><path d="M1.2 5L4 2.1L6.8 5" stroke="#2a2a2a" stroke-width="1.2" fill="none"/></svg>
<svg style="left:490px;top:439.5px" width="8" height="7"><path d="M1.2 1.8L4 4.7L6.8 1.8" stroke="#2a2a2a" stroke-width="1.2" fill="none"/></svg>
<div class="a" style="left:0;top:492px;width:923px;height:27px;background:#040508"></div>
<div class="a" style="left:0;top:492px;width:32px;height:27px;background:#050914"></div>
<svg style="left:10px;top:499px" width="13" height="13" viewBox="0 0 13 13">
<path d="M0.6 2.2 L4.9 1.6 L4.9 5.9 L0.6 5.9 Z M5.9 1.4 L12 0.6 L12 5.9 L5.9 5.9 Z M0.6 6.9 L4.9 6.9 L4.9 11.2 L0.6 10.6 Z M5.9 6.9 L12 6.9 L12 12 L5.9 11.4 Z" fill="#f4f4f4"/>
</svg>
<div class="a" style="left:32px;top:492px;width:233px;height:27px;background:#3a3a3a"></div>
<svg style="left:38px;top:496.8px" width="16" height="16"><circle cx="8" cy="8" r="6.2" fill="none" stroke="#f2f2f2" stroke-width="1.9"/></svg>
<div class="t" style="left:59.8px;top:501.3px;font-size:10.6px;letter-spacing:-0.3px;color:#a0a0a0">Ask me anything</div>
<svg style="left:246px;top:499px" width="10" height="13" viewBox="0 0 10 13">
<rect x="2.6" y="0.8" width="4.6" height="7.6" rx="2.3" fill="none" stroke="#8e8e8e" stroke-width="1.3"/>
<path d="M1.2 6.5 Q1.2 10.2 4.9 10.2 Q8.6 10.2 8.6 6.5 M4.9 10.2 V12.2" fill="none" stroke="#8e8e8e" stroke-width="1.1"/>
</svg>
<!-- task view -->
<svg style="left:274px;top:499.8px" width="14" height="11" viewBox="0 0 14 11">
<rect x="3" y="0.6" width="8" height="9.6" rx="0.8" fill="none" stroke="#dcdcdc" stroke-width="1"/>
<path d="M3 2.4 H0.6 V8.4 H3 M11 2.4 H13.4 V8.4 H11" fill="none" stroke="#dcdcdc" stroke-width="1"/>
</svg>
<!-- edge -->
<svg style="left:307.8px;top:498.2px" width="15" height="15" viewBox="0 0 15 15">
<path fill-rule="evenodd" d="M0.8 7.6 Q1.6 2.6 5.4 1.4 Q7 0.8 8.6 0.9 Q13.8 1.2 14 7.2 L14 8.4 L5 8.4 Q5.3 11.3 8.8 11.3 Q11.4 11.3 13.4 9.9 L13.4 12.9 Q11.4 14.2 8.4 14.2 Q2.6 14.2 2.6 8.6 Q2.6 6 4.4 4.2 Q2.2 5.2 0.8 7.6 Z M5.1 6.3 L10.6 6.3 Q10.4 3.9 7.9 3.9 Q5.6 3.9 5.1 6.3 Z" fill="#2080e0"/>
</svg>
<div class="a" style="left:301px;top:517px;width:27px;height:2px;background:#8fb4e4"></div>
<!-- file explorer -->
<svg style="left:340px;top:499px" width="16" height="13" viewBox="0 0 16 13">
<path d="M0.5 1.2 H6 L7.4 2.6 H15.2 V12.4 H0.5 Z" fill="#e8c864"/>
<rect x="0.5" y="4" width="14.7" height="8.4" fill="#f4dc88"/>
<path d="M3.6 12.6 V8.4 H12 V12.6 H10 V10.2 H5.6 V12.6 Z" fill="#3aa6c8"/>
</svg>
<!-- store -->
<svg style="left:373.5px;top:497px" width="15" height="17" viewBox="0 0 15 17">
<path d="M3.2 4.2 Q3.2 0.6 6 0.6 Q8.8 0.6 8.8 3.6" fill="none" stroke="#f2f2f2" stroke-width="1.3"/>
<path d="M0.6 4.2 L14.4 2.9 L14.4 14.8 L0.6 15.2 Z" fill="#f4f4f4"/>
<rect x="2.2" y="6.3" width="2.9" height="2.9" fill="#0a0a0a"/><rect x="5.8" y="6.3" width="2.9" height="2.9" fill="#0a0a0a"/>
<rect x="2.2" y="9.9" width="2.9" height="2.9" fill="#0a0a0a"/><rect x="5.8" y="9.9" width="2.9" height="2.9" fill="#0a0a0a"/>
</svg>
<!-- skype -->
<svg style="left:406px;top:497.5px" width="17" height="16" viewBox="0 0 17 16">
<path d="M4.6 0.8 Q2.6 0.6 1.4 2 Q0.4 3.4 0.9 5.4 Q0.4 7.8 1.6 10.6 Q3.4 14 7.2 14.8 Q9.4 15.4 11.8 14.8 Q13.8 15.4 15.2 14 Q16.4 12.6 15.9 10.6 Q16.6 7 14.4 3.8 Q12.2 0.6 8 0.6 Q6.4 0.4 4.6 0.8 Z" fill="#2aa2e2"/>
<path d="M11.4 4.8 Q10.4 3.4 8.2 3.4 Q5 3.4 5 5.6 Q5 7.4 8.4 8 Q11.6 8.6 11.6 10.2 Q11.6 12.2 8.4 12.2 Q5.8 12.2 4.8 10.6" fill="none" stroke="#fff" stroke-width="1.9" stroke-linecap="round"/>
</svg>
<div class="a" style="left:401px;top:517px;width:27px;height:2px;background:#8fb4e4"></div>
<!-- snipping tool -->
<svg style="left:439px;top:497.5px" width="16" height="16" viewBox="0 0 16 16">
<ellipse cx="6.5" cy="5" rx="5.4" ry="4.2" fill="#e8c6d0"/>
<ellipse cx="6" cy="4.4" rx="3.2" ry="1.6" fill="#f6e4ea"/>
<path d="M6.4 8.2 L12.6 14.6 M10.6 7.8 L6.8 14.2" stroke="#3a8ab0" stroke-width="1.4"/>
<circle cx="13" cy="14.2" r="1.6" fill="none" stroke="#3a8ab0" stroke-width="1.1"/>
<circle cx="6.4" cy="14.4" r="1.4" fill="none" stroke="#3a8ab0" stroke-width="1.1"/>
</svg>
<!-- devices/connect -->
<svg style="left:471px;top:499px" width="19" height="12" viewBox="0 0 19 12">
<path d="M4.2 2.6 V0.7 H14.8 V8.6" fill="none" stroke="#f0f0f0" stroke-width="1.2"/>
<rect x="0.7" y="3.4" width="4.6" height="8" rx="0.8" fill="none" stroke="#f0f0f0" stroke-width="1.2"/>
<rect x="6.6" y="8.4" width="11.8" height="2.4" fill="#f0f0f0"/>
</svg>
<!-- sticky notes -->
<svg style="left:505px;top:499px" width="17" height="13" viewBox="0 0 17 13">
<path d="M1.8 0.8 L9.6 0.4 L10.4 10.8 L0.4 10.2 Z" fill="#b8dcc0"/>
<path d="M6.4 2.2 L15.6 2.8 L16.4 11.8 L7.2 12.4 Z" fill="#f2e26a"/>
</svg>
<div class="a" style="left:500px;top:517px;width:27px;height:2px;background:#8fb4e4"></div>
<!-- chrome -->
<svg style="left:538.8px;top:497.4px" width="16" height="16" viewBox="0 0 16 16">
<path d="M8 8 L1.3 4.1 A7.7 7.7 0 0 1 14.7 4.1 Z" fill="#dd4b3a"/>
<path d="M8 8 L14.7 4.1 A7.7 7.7 0 0 1 8 15.7 Z" fill="#f6c82a"/>
<path d="M8 8 L8 15.7 A7.7 7.7 0 0 1 1.3 4.1 Z" fill="#3aa454"/>
<circle cx="8" cy="8" r="3.6" fill="#fff"/>
<circle cx="8" cy="8" r="2.8" fill="#4a88e0"/>
</svg>
<div class="a" style="left:533px;top:517px;width:27px;height:2px;background:#8fb4e4"></div>
<!-- resource monitor active -->
<div class="a" style="left:564px;top:492px;width:32px;height:27px;background:#3c3c3c"></div>
<div class="a" style="left:564px;top:517px;width:32px;height:2px;background:#9ab8e0"></div>
<svg style="left:571.5px;top:497px" width="17" height="17" viewBox="0 0 17 17">
<circle cx="8.2" cy="8.2" r="7.4" fill="#e8e0d8"/>
<circle cx="8.2" cy="8.2" r="5.8" fill="#f6f2ee"/>
<path d="M5 4.4 L11 11.8" stroke="#9a3a22" stroke-width="1.5"/>
</svg>
<!-- tray -->
<svg style="left:794px;top:502px" width="10" height="6" viewBox="0 0 10 6"><path d="M0.8 5.4 L4.8 1.2 L8.8 5.4" fill="none" stroke="#e0e0e0" stroke-width="1.1"/></svg>
<svg style="left:809.5px;top:501px" width="13" height="9" viewBox="0 0 13 9">
<rect x="3.6" y="2.2" width="8.6" height="5.4" fill="none" stroke="#e8e8e8" stroke-width="1.1"/>
<rect x="4.8" y="3.4" width="6.2" height="3" fill="#e8e8e8"/>
<path d="M0.6 1 V4 H3.6 M2 0.4 V2.2 M0.4 4.8 H3.6" fill="none" stroke="#e8e8e8" stroke-width="1"/>
</svg>
<svg style="left:825.5px;top:500.8px" width="14" height="10" viewBox="0 0 14 10">
<rect x="3.4" y="0.6" width="9.8" height="6.8" fill="none" stroke="#e8e8e8" stroke-width="1.1"/>
<path d="M8.2 7.4 V9.2 M5.4 9.4 H11" stroke="#e8e8e8" stroke-width="1"/>
<rect x="0.6" y="1.8" width="3.6" height="5" fill="#040508" stroke="#e8e8e8" stroke-width="0.9"/>
</svg>
<svg style="left:841.5px;top:501.3px" width="12" height="8" viewBox="0 0 12 8">
<path d="M0.6 2.6 H2.4 L5.4 0.6 V7.4 L2.4 5.4 H0.6 Z" fill="none" stroke="#e0e0e0" stroke-width="1"/>
<path d="M7.6 2.4 L10.8 5.6 M10.8 2.4 L7.6 5.6" stroke="#e0e0e0" stroke-width="1"/>
</svg>
<svg style="left:858.5px;top:500px" width="12" height="11" viewBox="0 0 12 11">
<path d="M0.2 0.2 H11.4 V8.6 H6.6 L5.2 10.6 L5.2 8.6 H0.2 Z" fill="#f4f4f4"/>
<path d="M2.2 2.4 H9.4 M2.2 4.4 H9.4 M2.2 6.4 H7.2" stroke="#222" stroke-width="0.9"/>
</svg>
<div class="t" style="left:881.3px;top:495.4px;font-size:8.1px;color:#f0f0f0">3:51 PM</div>
<div class="t" style="left:879.8px;top:506.3px;font-size:8.25px;color:#f0f0f0">8/6/2015</div>
<div class="a" style="left:919.3px;top:492px;width:1.2px;height:27px;background:#555"></div>
<div class="t" style="left:725.5px;top:459.5px;font-size:9px;color:#383b48">G</div>
<div class="t" style="left:804px;top:465px;font-size:8.5px;color:#3e4150">ng</div>
<div class="t" style="left:858px;top:469.8px;font-size:8.5px;color:#6a6c78">vate</div>

</body></html>
